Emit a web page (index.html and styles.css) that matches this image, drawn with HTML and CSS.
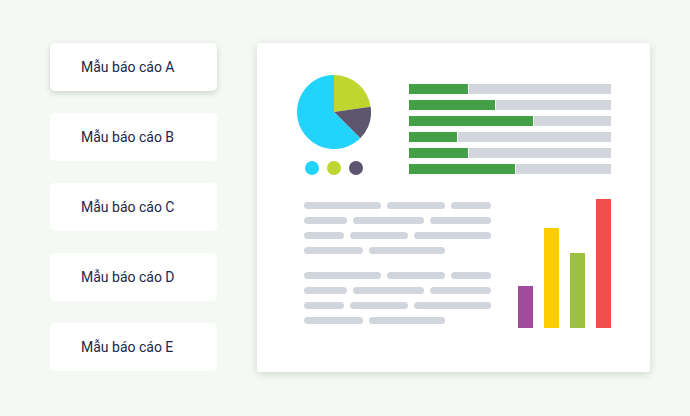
FILE: index.html
```html
<!DOCTYPE html>
<html lang="vi">
<head>
<meta charset="utf-8">
<link rel="stylesheet" href="styles.css">
</head>
<body>
<div class="page">
  <div class="sidebar">
    <div class="card card-active">Mẫu báo cáo A</div>
    <div class="card">Mẫu báo cáo B</div>
    <div class="card">Mẫu báo cáo C</div>
    <div class="card">Mẫu báo cáo D</div>
    <div class="card">Mẫu báo cáo E</div>
  </div>
  <div class="panel">
    <div class="top-row">
      <div class="pie-block">
        <svg class="pie" width="74" height="74" viewBox="0 0 74 74">
          <path d="M37 37 L37 0 A37 37 0 0 1 73.64 31.85 Z" fill="#bfd630"/>
          <path d="M37 37 L73.64 31.85 A37 37 0 0 1 63.16 63.16 Z" fill="#5c566e"/>
          <path d="M37 37 L63.16 63.16 A37 37 0 1 1 37 0 Z" fill="#22d3fb"/>
        </svg>
        <div class="dots">
          <span class="dot dot-cyan"></span>
          <span class="dot dot-lime"></span>
          <span class="dot dot-dark"></span>
        </div>
      </div>
      <div class="hbars">
        <div class="hbar"><span class="fill" style="width:60px"></span></div>
        <div class="hbar"><span class="fill" style="width:87px"></span></div>
        <div class="hbar"><span class="fill" style="width:125px"></span></div>
        <div class="hbar"><span class="fill" style="width:49px"></span></div>
        <div class="hbar"><span class="fill" style="width:60px"></span></div>
        <div class="hbar"><span class="fill" style="width:107px"></span></div>
      </div>
    </div>
    <div class="bottom-row">
      <div class="text-block">
        <div class="group">
          <div class="line"><span class="seg" style="width:77px"></span><span class="seg" style="width:58px"></span><span class="seg" style="width:40px"></span></div>
          <div class="line"><span class="seg" style="width:43px"></span><span class="seg" style="width:71px"></span><span class="seg" style="width:61px"></span></div>
          <div class="line"><span class="seg" style="width:40px"></span><span class="seg" style="width:58px"></span><span class="seg" style="width:77px"></span></div>
          <div class="line"><span class="seg" style="width:59px"></span><span class="seg" style="width:76px"></span></div>
        </div>
        <div class="group">
          <div class="line"><span class="seg" style="width:77px"></span><span class="seg" style="width:58px"></span><span class="seg" style="width:40px"></span></div>
          <div class="line"><span class="seg" style="width:43px"></span><span class="seg" style="width:71px"></span><span class="seg" style="width:61px"></span></div>
          <div class="line"><span class="seg" style="width:40px"></span><span class="seg" style="width:58px"></span><span class="seg" style="width:77px"></span></div>
          <div class="line"><span class="seg" style="width:59px"></span><span class="seg" style="width:76px"></span></div>
        </div>
      </div>
      <div class="vbars">
        <span class="vbar vbar-purple" style="height:42px"></span>
        <span class="vbar vbar-yellow" style="height:100px"></span>
        <span class="vbar vbar-green" style="height:75px"></span>
        <span class="vbar vbar-red" style="height:129px"></span>
      </div>
    </div>
  </div>
</div>
</body>
</html>
```
FILE: styles.css
```css
* { box-sizing: border-box; }
html, body {
  margin: 0;
  padding: 0;
  background: #f5f9f4;
  width: 690px;
  height: 416px;
  overflow: hidden;
  font-family: Roboto, "Noto Sans", sans-serif;
}
.page {
  display: flex;
  padding: 43px 0 0 50px;
  gap: 40px;
}
.sidebar {
  display: flex;
  flex-direction: column;
  gap: 22px;
  width: 167px;
}
.card {
  height: 48px;
  background: #ffffff;
  border-radius: 5px;
  display: flex;
  align-items: center;
  padding-left: 31px;
  font-size: 14px;
  color: #1c2747;
}
.card-active {
  box-shadow: 0 2px 6px rgba(0, 0, 0, 0.16);
}
.panel {
  width: 393px;
  height: 329px;
  background: #ffffff;
  border-radius: 2px;
  box-shadow: 0 2px 8px rgba(0, 0, 0, 0.14);
  padding: 32px 39px 0 40px;
}
.top-row {
  display: flex;
}
.pie-block {
  width: 74px;
  display: flex;
  flex-direction: column;
  align-items: center;
}
.pie { display: block; }
.dots {
  display: flex;
  gap: 8px;
  margin-top: 12px;
}
.dot {
  width: 14px;
  height: 14px;
  border-radius: 50%;
}
.dot-cyan { background: #22d3fb; }
.dot-lime { background: #bfd630; }
.dot-dark { background: #5c566e; }
.hbars {
  margin-left: 38px;
  margin-top: 9px;
  display: flex;
  flex-direction: column;
  gap: 6px;
  width: 202px;
}
.hbar {
  height: 10px;
  background: #d2d5dc;
  display: flex;
}
.fill {
  display: block;
  height: 10px;
  background: #43a047;
  border-right: 1px solid #ffffff;
}
.bottom-row {
  display: flex;
  justify-content: space-between;
  align-items: flex-start;
  margin-top: 24px;
  padding-left: 7px;
}
.text-block {
  margin-top: 3px;
  display: flex;
  flex-direction: column;
  gap: 18px;
}
.group {
  display: flex;
  flex-direction: column;
  gap: 8px;
}
.line {
  display: flex;
  gap: 6px;
}
.seg {
  display: block;
  height: 7px;
  border-radius: 4px;
  background: #d1d5de;
}
.vbars {
  display: flex;
  align-items: flex-end;
  gap: 11px;
  height: 129px;
}
.vbar {
  display: block;
  width: 15px;
}
.vbar-purple { background: #a04b9b; }
.vbar-yellow { background: #ffcc00; }
.vbar-green { background: #9cc140; }
.vbar-red { background: #f04e48; }
```
